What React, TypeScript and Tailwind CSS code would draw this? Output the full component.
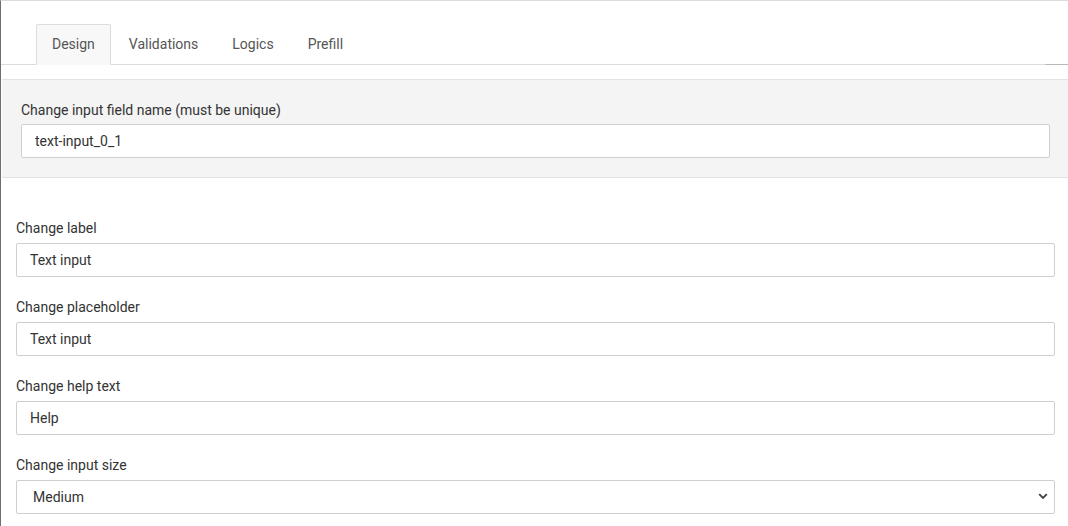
import { useState } from "react";

const tabs = ["Design", "Validations", "Logics", "Prefill"];

const fields = [
  { label: "Change label", value: "Text input" },
  { label: "Change placeholder", value: "Text input" },
  { label: "Change help text", value: "Help" },
];

const inputCls =
  "block w-full h-[34px] px-[13px] bg-white border border-[#cfcfcf] rounded-[2px] text-[14px] text-[#333] outline-none";

export default function App() {
  const [active, setActive] = useState("Design");

  return (
    <div
      className="w-full h-[526px] overflow-hidden bg-white border-t border-[#dcdcdc] border-l border-l-[#6e6e6e] text-[#333]"
      style={{ fontFamily: "Roboto, 'Liberation Sans', sans-serif" }}
    >
      {/* Tab header */}
      <div className="-ml-px border-l border-l-[#0f4c6c] pt-[23px]">
        <div className="relative flex pl-[35px] border-b border-[#dcdcdc]">
          {tabs.map((t) => (
            <button
              key={t}
              onClick={() => setActive(t)}
              className={
                "h-[41px] px-[15px] mr-[2px] -mb-px text-[14px] rounded-t-[2px] border " +
                (active === t
                  ? "bg-[#f8f8f8] border-[#dcdcdc] border-b-[#f8f8f8] text-[#555]"
                  : "border-transparent text-[#555]")
              }
            >
              {t}
            </button>
          ))}
          <div className="absolute right-0 -bottom-px w-[23px] h-px bg-[#b9b9b9]" />
        </div>
      </div>

      {/* Unique name panel */}
      <div className="mt-[14px] ml-px bg-[#f4f4f4] border-t border-b border-[#e3e3e3] pt-[20px] pb-[19px] pl-[19px] pr-[18px]">
        <label className="block text-[14px] leading-5 mb-[4px]">
          Change input field name (must be unique)
        </label>
        <input className={inputCls} defaultValue="text-input_0_1" />
      </div>

      {/* Field settings */}
      <div className="pl-[15px] pr-[13px] pt-[40px] flex flex-col gap-[20px]">
        {fields.map((f) => (
          <div key={f.label}>
            <label className="block text-[14px] leading-5 mb-[5px]">{f.label}</label>
            <input className={inputCls} defaultValue={f.value} />
          </div>
        ))}
        <div>
          <label className="block text-[14px] leading-5 mb-[5px]">Change input size</label>
          <div className="relative">
            <select className={inputCls + " appearance-none pl-4"} defaultValue="Medium">
              <option>Small</option>
              <option>Medium</option>
              <option>Large</option>
            </select>
            <svg
              className="absolute right-[7px] top-[13px] w-[10px] h-[7px] pointer-events-none"
              viewBox="0 0 10 7"
            >
              <path d="M1.2 1.2 L5 5 L8.8 1.2" fill="none" stroke="#444" strokeWidth="1.9" />
            </svg>
          </div>
        </div>
      </div>
    </div>
  );
}
